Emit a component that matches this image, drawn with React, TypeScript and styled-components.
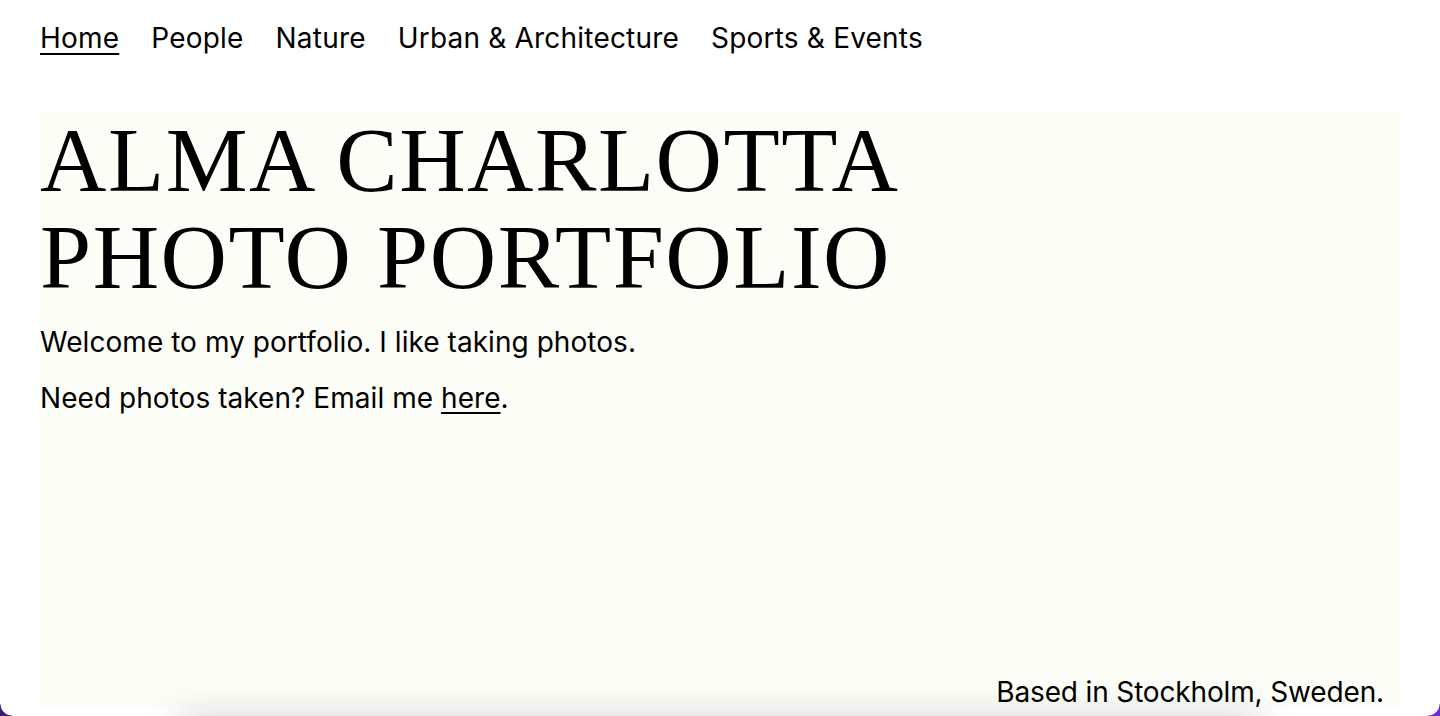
import React from "react";
import styled, { createGlobalStyle } from "styled-components";

const GlobalStyle = createGlobalStyle`
  html, body {
    margin: 0;
    padding: 0;
    background: #ffffff;
    overflow: hidden;
  }
  body {
    font-family: Inter, "Noto Sans", sans-serif;
    color: #000000;
  }
`;

const Page = styled.div`
  padding: 0 40px;
  height: 716px;
  overflow: hidden;
`;

const Nav = styled.nav`
  height: 76px;
  display: flex;
  align-items: center;
  gap: 32px;
`;

const NavLink = styled.a<{ $active?: boolean }>`
  font-size: 28px;
  letter-spacing: 0.2px;
  color: #000;
  text-decoration: ${(p) => (p.$active ? "underline" : "none")};
  text-decoration-thickness: 2px;
  text-underline-offset: 5px;
  cursor: pointer;
`;

const Hero = styled.section`
  margin-top: 36px;
  height: 596px;
  background: #fcfdf7;
  display: flex;
  flex-direction: column;
`;

const Title = styled.h1`
  margin: 0;
  font-family: "Liberation Serif", "DejaVu Serif", serif;
  font-weight: 400;
  font-size: 92px;
  line-height: 97px;
  letter-spacing: 1.5px;
`;

const Text = styled.p`
  margin: 16px 0 0;
  font-size: 28px;
  line-height: 40px;
  letter-spacing: 0.05px;
`;

const MailLink = styled.a`
  color: #000;
  text-decoration: underline;
  text-decoration-thickness: 2px;
  text-underline-offset: 4px;
`;

const Location = styled.p`
  margin: auto 16px 0 0;
  text-align: right;
  font-size: 28px;
  line-height: 31px;
  letter-spacing: -0.15px;
`;

const Gallery = styled.div`
  margin: 14px 140px 0;
  height: 300px;
  background: #ffffff;
  box-shadow: 0 0 36px rgba(0, 0, 0, 0.24);
`;

const Corner = styled.div<{ $side: "left" | "right" }>`
  position: fixed;
  bottom: 0;
  ${(p) => (p.$side === "left" ? "left: 0;" : "right: 0;")}
  width: 12px;
  height: 12px;
  background: ${(p) =>
    p.$side === "left"
      ? "radial-gradient(circle at 100% 0%, transparent 11px, #3b1a78 12px)"
      : "radial-gradient(circle at 0% 0%, transparent 11px, #6a2bd6 12px)"};
`;

export default function App() {
  return (
    <>
      <GlobalStyle />
      <Page>
        <Nav>
          <NavLink $active>Home</NavLink>
          <NavLink>People</NavLink>
          <NavLink>Nature</NavLink>
          <NavLink>Urban &amp; Architecture</NavLink>
          <NavLink>Sports &amp; Events</NavLink>
        </Nav>
        <Hero>
          <Title>
            ALMA CHARLOTTA
            <br />
            PHOTO PORTFOLIO
          </Title>
          <Text>Welcome to my portfolio. I like taking photos.</Text>
          <Text>
            Need photos taken? Email me <MailLink>here</MailLink>.
          </Text>
          <Location>Based in Stockholm, Sweden.</Location>
        </Hero>
        <Gallery />
      </Page>
      <Corner $side="left" />
      <Corner $side="right" />
    </>
  );
}
